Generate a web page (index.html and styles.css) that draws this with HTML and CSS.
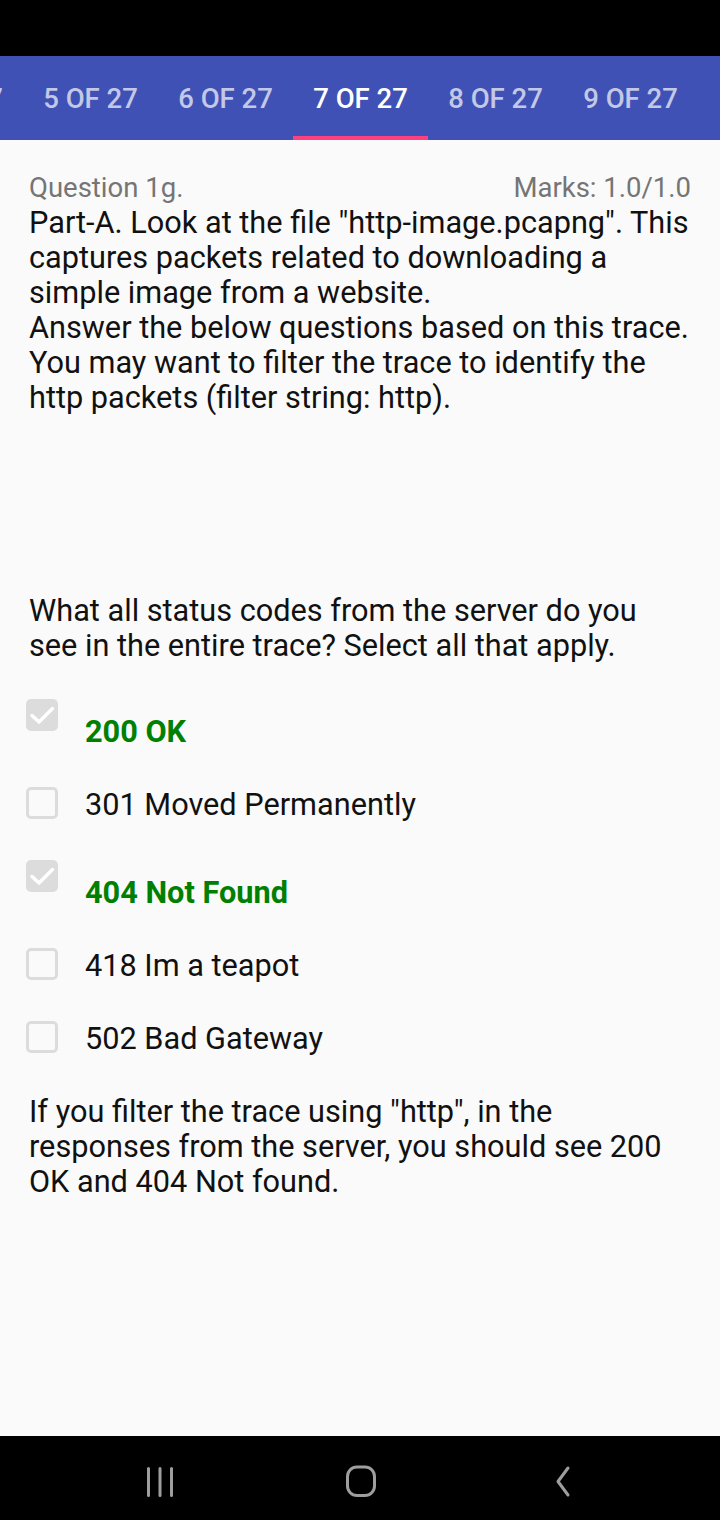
FILE: index.html
```html
<!DOCTYPE html>
<html>
<head>
<meta charset="utf-8">
<link rel="stylesheet" href="styles.css">
</head>
<body>
<div class="status-bar"></div>
<nav class="tabs">
  <div class="tab">4 OF 27</div>
  <div class="tab">5 OF 27</div>
  <div class="tab">6 OF 27</div>
  <div class="tab active">7 OF 27</div>
  <div class="tab">8 OF 27</div>
  <div class="tab">9 OF 27</div>
</nav>
<main class="content">
  <div class="q-head">
    <span>Question 1g.</span>
    <span>Marks: 1.0/1.0</span>
  </div>
  <p class="q-text">Part-A. Look at the file "http-image.pcapng". This captures packets related to downloading a simple image from a website.<br>Answer the below questions based on this trace. You may want to filter the trace to identify the http packets (filter string: http).</p>
  <p class="q-prompt">What all status codes from the server do you see in the entire trace? Select all that apply.</p>
  <ul class="options">
    <li class="option checked">
      <span class="box"><svg viewBox="0 0 32 32" width="32" height="32"><path d="M6 16.5l7 6.5L26.5 9.5" fill="none" stroke="#fff" stroke-width="3.5" stroke-linecap="round" stroke-linejoin="round"/></svg></span>
      <span class="label">200 OK</span>
    </li>
    <li class="option">
      <span class="box"></span>
      <span class="label">301 Moved Permanently</span>
    </li>
    <li class="option checked">
      <span class="box"><svg viewBox="0 0 32 32" width="32" height="32"><path d="M6 16.5l7 6.5L26.5 9.5" fill="none" stroke="#fff" stroke-width="3.5" stroke-linecap="round" stroke-linejoin="round"/></svg></span>
      <span class="label">404 Not Found</span>
    </li>
    <li class="option">
      <span class="box"></span>
      <span class="label">418 Im a teapot</span>
    </li>
    <li class="option">
      <span class="box"></span>
      <span class="label">502 Bad Gateway</span>
    </li>
  </ul>
  <p class="feedback">If you filter the trace using "http", in the responses from the server, you should see 200 OK and 404 Not found.</p>
</main>
<footer class="nav-bar">
  <svg class="nav-icon" width="40" height="40" viewBox="0 0 40 40"><path d="M8.5 7.5v27M20 7.5v27M31.5 7.5v27" stroke="#9e9e9e" stroke-width="3" stroke-linecap="round"/></svg>
  <svg class="nav-icon" width="40" height="40" viewBox="0 0 40 40"><rect x="6.5" y="6" width="27" height="28.5" rx="9.5" fill="none" stroke="#9e9e9e" stroke-width="3"/></svg>
  <svg class="nav-icon" width="40" height="40" viewBox="0 0 40 40"><path d="M26 7L16 20.5l10 13.5" fill="none" stroke="#9e9e9e" stroke-width="3" stroke-linecap="round" stroke-linejoin="round"/></svg>
</footer>
</body>
</html>
```
FILE: styles.css
```css
* { box-sizing: border-box; }
html, body {
  margin: 0;
  padding: 0;
}
body {
  width: 720px;
  height: 1520px;
  background: #fafafa;
  font-family: Roboto, "Noto Sans", sans-serif;
  color: #111;
  display: flex;
  flex-direction: column;
  overflow: hidden;
}
.status-bar {
  height: 56px;
  background: #000;
  flex: none;
}
.tabs {
  height: 84px;
  background: #3f51b5;
  display: flex;
  flex: none;
  margin-left: -112px;
  overflow: hidden;
}
.tab {
  width: 135px;
  flex: none;
  display: flex;
  align-items: center;
  justify-content: center;
  font-size: 27.5px;
  font-weight: 500;
  color: rgba(255,255,255,0.7);
  border-bottom: 4px solid transparent;
  padding-top: 4px;
  white-space: nowrap;
}
.tab.active {
  color: #fff;
  border-bottom-color: #ff4081;
}
.content {
  flex: 1;
  padding: 30px 29px 0 29px;
  font-size: 30.7px;
  line-height: 35px;
}
.q-head {
  display: flex;
  justify-content: space-between;
  color: #757575;
  font-size: 27.5px;
}
.q-text, .q-prompt, .feedback {
  margin: 0;
}
.q-text {
  margin-bottom: 178px;
}
.q-prompt {
  margin-bottom: 36px;
}
.options {
  list-style: none;
  margin: 0 0 0 -3px;
  padding: 0;
}
.option {
  display: flex;
  align-items: flex-start;
  height: 73px;
}
.option.checked {
  height: 88px;
}
.box {
  width: 32px;
  height: 32px;
  border: 3px solid #dcdcdc;
  border-radius: 5px;
  flex: none;
  position: relative;
}
.box svg {
  position: absolute;
  left: -3px;
  top: -3px;
}
.option.checked .box {
  background: #dcdcdc;
}
.label {
  margin-left: 27px;
  margin-top: 0;
}
.option.checked .label {
  margin-top: 15px;
  color: #008000;
  font-weight: 700;
}
.nav-bar {
  height: 84px;
  background: #000;
  flex: none;
  display: flex;
  align-items: center;
  justify-content: space-between;
  padding: 5px 138px 0 140px;
}
```
